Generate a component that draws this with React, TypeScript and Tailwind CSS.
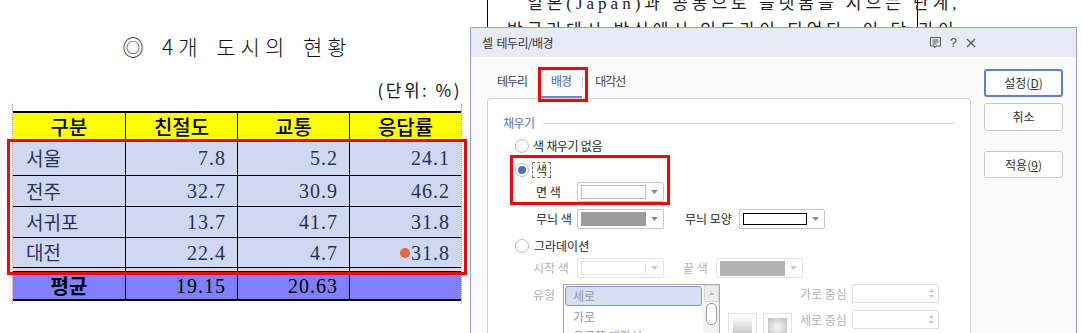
import React from "react";

type Row = { name: string; a: string; b: string; c: string; h: string; dot?: boolean };

const rows: Row[] = [
  { name: "서울", a: "7.8", b: "5.2", c: "24.1", h: "h-[35px]" },
  { name: "전주", a: "32.7", b: "30.9", c: "46.2", h: "h-[31px]" },
  { name: "서귀포", a: "13.7", b: "41.7", c: "31.8", h: "h-[31px]" },
  { name: "대전", a: "22.4", b: "4.7", c: "31.8", h: "h-[30px]", dot: true },
];

function NumCell({ v, dot }: { v: string; dot?: boolean }) {
  return (
    <div className="w-[112px] h-full border-l border-black flex items-center justify-end pr-[11px] font-['Liberation_Serif',serif] text-[20px] tracking-[1px] text-[#27305a]">
      {dot ? <span className="mr-[1px] w-[10px] h-[10px] rounded-full bg-[#e8643f]" /> : null}
      {v}
    </div>
  );
}

function CityTable() {
  return (
    <div className="w-[448px] text-black">
      <div className="flex h-[30px] border-t-2 border-b border-black bg-[#ffff00] text-[20px] font-medium">
        {["구분", "친절도", "교통", "응답률"].map((t, i) => (
          <div
            key={t}
            className={`w-[112px] h-full flex items-center justify-center ${i > 0 ? "border-l border-black" : ""}`}
          >
            {t}
          </div>
        ))}
      </div>
      {rows.map((r) => (
        <div key={r.name} className={`flex ${r.h} border-b border-black bg-[#cfd8f1]`}>
          <div className="w-[112px] h-full flex items-center pl-[13px] text-[19px] text-[#2c3355]">{r.name}</div>
          <NumCell v={r.a} />
          <NumCell v={r.b} />
          <NumCell v={r.c} dot={r.dot} />
        </div>
      ))}
      <div className="flex h-[4px] border-b border-black bg-[#cfd8f1]">
        <div className="w-[112px]" />
        <div className="w-[112px] border-l border-black" />
        <div className="w-[112px] border-l border-black" />
        <div className="w-[112px] border-l border-black" />
      </div>
      <div className="flex h-[29px] border-b-2 border-black bg-[#8080ff]">
        <div className="w-[112px] h-full flex items-center justify-center text-[20px] font-bold">평균</div>
        <div className="w-[112px] h-full border-l border-black flex items-center justify-end pr-[11px] font-['Liberation_Serif',serif] text-[20px] tracking-[1px]">19.15</div>
        <div className="w-[112px] h-full border-l border-black flex items-center justify-end pr-[11px] font-['Liberation_Serif',serif] text-[20px] tracking-[1px]">20.63</div>
        <div className="w-[112px] h-full border-l border-black" />
      </div>
    </div>
  );
}

function Radio({ on }: { on?: boolean }) {
  return (
    <span className="w-[14px] h-[14px] rounded-full border border-[#b9b9b9] bg-white flex items-center justify-center shrink-0">
      {on ? <span className="w-[8px] h-[8px] rounded-full bg-[#4c6cc4]" /> : null}
    </span>
  );
}

function Arrow({ light }: { light?: boolean }) {
  return (
    <svg width="7" height="4" viewBox="0 0 7 4" className="shrink-0">
      <path d="M0 0h7L3.5 4z" fill={light ? "#c8c8c8" : "#8a8a8a"} />
    </svg>
  );
}

function ColorBox({
  w,
  swatch,
  disabled,
}: {
  w: string;
  swatch: React.ReactNode;
  disabled?: boolean;
}) {
  return (
    <div
      className={`${w} h-[20px] rounded-[2px] border bg-white flex items-center pl-[3px] pr-[5px] gap-[5px] ${
        disabled ? "border-[#e2e2e2]" : "border-[#c6c6c6]"
      }`}
    >
      {swatch}
      <Arrow light={disabled} />
    </div>
  );
}

function Spinner() {
  return (
    <div className="w-[87px] h-[19px] border border-[#dddddd] rounded-[2px] bg-white flex justify-end">
      <div className="w-[14px] h-full flex flex-col items-center justify-center gap-[3px]">
        <svg width="5" height="3" viewBox="0 0 5 3"><path d="M0 3h5L2.5 0z" fill="#c4c4c4" /></svg>
        <svg width="5" height="3" viewBox="0 0 5 3"><path d="M0 0h5L2.5 3z" fill="#c4c4c4" /></svg>
      </div>
    </div>
  );
}

function Dialog() {
  return (
    <div className="absolute left-[470px] top-[27px] w-[607px] h-[320px] border border-[#8ea2d8] bg-[#fafafa] text-[12px] text-[#262626]">
      <div className="h-[29px] bg-[#e8ebf6] flex items-center pl-[11px] pr-[100px]">
        <span className="text-[12px] tracking-[-0.6px] [word-spacing:2px] text-[#333]">셀 테두리/배경</span>
        <div className="ml-auto flex items-center gap-[9px] text-[#555] leading-none">
          <svg width="11" height="12" viewBox="0 0 11 12" fill="none" stroke="#555" strokeWidth="1">
            <path d="M0.5 0.5h10v8.5H6L4.5 11V9H0.5z" />
            <path d="M2.5 3h6M2.5 5h6M2.5 7h4" />
          </svg>
          <span className="text-[13px] leading-none font-['Liberation_Sans',sans-serif]">?</span>
          <svg width="10" height="10" viewBox="0 0 10 10" stroke="#555" strokeWidth="1.2">
            <path d="M1 1l8 8M9 1l-8 8" />
          </svg>
        </div>
      </div>
      <div className="flex">
        <div className="pl-[16px]">
          <div className="flex h-[41px] pl-[10px] text-[12px] tracking-[-1px]">
            <span className="mt-[15px] text-[#444]">테두리</span>
            <div className="ml-[13px] w-[42px] h-[41px] border-b-2 border-[#6c86d8] flex justify-center pt-[15px] text-[#4a68c0]">
              배경
            </div>
            <span className="mt-[20px] w-px h-[11px] bg-[#cfcfcf]" />
            <span className="ml-[12px] mt-[15px] text-[#444]">대각선</span>
          </div>
          <div className="w-[484px] h-[260px] border border-[#d3d3d3] rounded-[3px] bg-white">
            <div className="mt-[16px] h-[16px] flex items-center pl-[15px] pr-[15px]">
              <span className="text-[#5572c4] tracking-[-0.5px]">채우기</span>
              <span className="ml-[8px] flex-1 h-px bg-[#d6d6d6]" />
            </div>
            <div className="mt-[7px] h-[16px] flex items-center pl-[27px] gap-[4px]">
              <Radio />
              <span className="tracking-[-0.3px]">색 채우기 없음</span>
            </div>
            <div className="mt-[8px] h-[16px] flex items-center pl-[27px] gap-[3px]">
              <Radio on />
              <span className="h-[16px] px-[3px] border border-dashed border-[#777] flex items-center leading-none">색</span>
            </div>
            <div className="mt-[4px] h-[20px] flex items-center pl-[48px]">
              <span className="w-[41px]">면 색</span>
              <ColorBox w="w-[87px]" swatch={<span className="w-[68px] h-[14px] border border-[#bdbdbd] bg-white" />} />
            </div>
            <div className="mt-[7px] h-[20px] flex items-center pl-[48px]">
              <span className="w-[41px]">무늬 색</span>
              <ColorBox w="w-[87px]" swatch={<span className="w-[69px] h-[14px] bg-[#9b9b9b]" />} />
              <span className="ml-[21px] w-[54px]">무늬 모양</span>
              <ColorBox w="w-[86px]" swatch={<span className="w-[65px] h-[12px] border border-black bg-white" />} />
            </div>
            <div className="mt-[9px] h-[16px] flex items-center pl-[27px] gap-[5px]">
              <Radio />
              <span>그라데이션</span>
            </div>
            <div className="mt-[4px] h-[20px] flex items-center pl-[45px] text-[#b5b5b5]">
              <span className="w-[44px]">시작 색</span>
              <ColorBox w="w-[87px]" disabled swatch={<span className="w-[68px] h-[14px] border border-[#e2e2e2] bg-white" />} />
              <span className="ml-[19px] w-[33px]">끝 색</span>
              <ColorBox w="w-[87px]" disabled swatch={<span className="w-[69px] h-[15px] bg-[#b3b3b3]" />} />
            </div>
            <div className="mt-[6px] flex pl-[45px]">
              <span className="w-[30px] mt-[2px] text-[#b5b5b5]">유형</span>
              <div className="w-[157px] h-[60px] border border-[#a9a9a9] flex text-[#9a9a9a] bg-white">
                <div className="flex-1 pt-px pl-px">
                  <div className="h-[20px] rounded-[3px] border border-[#7d95dc] bg-[#d7dff5] flex items-center pl-[7px] mr-px">세로</div>
                  <div className="h-[21px] flex items-center pl-[8px]">가로</div>
                  <div className="h-[18px] flex items-end pl-[8px]">오른쪽 대각선</div>
                </div>
                <div className="w-[16px] bg-[#f2f2f2] flex flex-col items-center">
                  <div className="w-[15px] h-[17px] border border-[#d8d8d8] bg-[#ececec] flex items-center justify-center">
                    <svg width="5" height="3" viewBox="0 0 5 3"><path d="M0 3h5L2.5 0z" fill="#b8b8b8" /></svg>
                  </div>
                  <div className="mt-px w-[11px] h-[22px] rounded-[5px] border border-[#9c9c9c] bg-white" />
                </div>
              </div>
              <div className="ml-[8px] pt-[29px] flex gap-[6px]">
                <div className="w-[29px] h-[29px] border border-[#e3e3e3] bg-white p-[4px]">
                  <div className="w-full h-full bg-[linear-gradient(#fafafa,#bcbcbc)]" />
                </div>
                <div className="w-[29px] h-[29px] border border-[#e3e3e3] bg-white p-[4px]">
                  <div className="w-full h-full bg-[radial-gradient(circle,#f8f8f8,#bdbdbd)]" />
                </div>
              </div>
              <div className="ml-[8px] flex flex-col gap-[7px] text-[#b5b5b5]">
                <div className="flex items-center">
                  <span className="w-[52px]">가로 중심</span>
                  <Spinner />
                </div>
                <div className="flex items-center">
                  <span className="w-[52px]">세로 중심</span>
                  <Spinner />
                </div>
              </div>
            </div>
          </div>
        </div>
        <div className="ml-[13px] pt-[12px] w-[79px] flex flex-col text-[#333]">
          <button className="h-[28px] rounded-[3px] border-2 border-[#5d7fd9] bg-white">
            설정(<span className="underline">D</span>)
          </button>
          <button className="mt-[6px] h-[28px] rounded-[3px] border border-[#c9c9c9] bg-white">취소</button>
          <button className="mt-[20px] h-[27px] rounded-[3px] border border-[#c9c9c9] bg-white">
            적용(<span className="underline">9</span>)
          </button>
        </div>
      </div>
    </div>
  );
}

export default function App() {
  return (
    <div className="relative w-[1083px] h-[333px] overflow-hidden bg-white font-['Noto_Sans_CJK_KR','Noto_Sans',sans-serif]">
      <div className="flex">
        <div className="w-[487px] pl-[13px]">
          <div className="w-[448px] pt-[31px] h-[69px] text-center text-[21px] tracking-[5px] [word-spacing:4px] font-light text-[#111]">
            ◎ 4개 도시의 현황
          </div>
          <div className="w-[449px] h-[42px] pt-[8px] text-right text-[17px] tracking-[2.5px] text-[#111]">(단위: %)</div>
          <CityTable />
        </div>
        <div className="w-[431px] h-[333px] border-x border-black">
          <div className="-mt-[10px] pl-[39px] pr-[20px] font-['Liberation_Serif','Noto_Sans_CJK_KR',serif] text-[17px] leading-[27px] tracking-[4px] whitespace-nowrap text-[#222]">
            <div>일본(Japan)과 공동으로 플랫폼을 지으는 단계,</div>
            <div className="-ml-[20px]">방글라데시 방식에서 인도라이 되었다. 이 단 라이</div>
          </div>
        </div>
      </div>

      {/* guides + annotation boxes */}
      <div className="absolute left-[12px] top-[104px] h-[200px] border-l border-dotted border-[#f08080]" />
      <div className="absolute left-[461px] top-[104px] h-[200px] border-l border-dotted border-[#f08080]" />
      <div className="absolute left-[7px] top-[139px] w-[460px] h-[136px] border-[3px] border-[#ff0000]" />

      <Dialog />

      <div className="absolute left-[538px] top-[67px] w-[50px] h-[35px] border-[3px] border-[#ff0000]" />
      <div className="absolute left-[510px] top-[155px] w-[160px] h-[50px] border-[3px] border-[#ff0000]" />
    </div>
  );
}
